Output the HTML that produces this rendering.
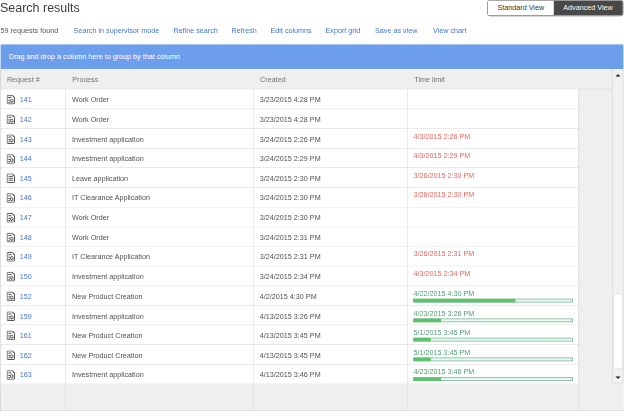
<!DOCTYPE html>
<html><head><meta charset="utf-8">
<style>
*{box-sizing:border-box;margin:0;padding:0}
html,body{width:624px;height:411px;overflow:hidden;background:#fff}
#w{position:absolute;left:0;top:0;width:1040px;height:685px;transform:scale(0.6);transform-origin:0 0;font-family:"Liberation Sans",Arial,sans-serif;color:#444;font-size:12px;overflow:hidden}
.title{position:absolute;left:0;top:-1px;font-size:20.8px;color:#3d3d3d;line-height:28px;white-space:nowrap}
.tabs{position:absolute;left:812px;top:0;width:227px;height:27px;border:1.5px solid #555;border-radius:5px;overflow:hidden;line-height:23px}
.tabs span{position:absolute;top:0;height:24px;text-align:center}
.tabs .a{left:0;width:110px;color:#333;background:#fff}
.tabs .b{left:110px;width:114px;color:#fff;background:#484848}
.tb{position:absolute;top:44.3px;line-height:15px;white-space:nowrap;color:#4376d4}
.tb.g{color:#555}
.bar{position:absolute;left:1px;top:74px;width:1038px;height:41px;background:#6d9eeb;color:#fff;line-height:41px;padding-left:14px}
.grid{position:absolute;left:0;top:115px;width:1039px;height:570px;background:#efefef;border-bottom:1px solid #c4c4c4;box-shadow:inset 1px 0 0 #d8d8d8,inset 0 1px 0 #f8f8f8}
.hd{position:absolute;top:0;height:34px;line-height:34px;color:#727272;border-bottom:1px solid #d8d8d8;padding-left:10.5px}
.row{position:absolute;left:0;width:965px;height:32.77px;background:#fff}
.row>div{position:absolute;top:0;height:100%;line-height:35px;border-right:1px solid #dcdcdc;border-bottom:1px solid #dcdcdc;white-space:nowrap;padding-left:10px}
.c1{left:0;width:110px;padding-left:33px !important;color:#4376d4}
.c2{left:110px;width:313px;color:#505050}
.c3{left:423px;width:257px;color:#505050}
.c4{left:680px;width:285px;padding-left:9px !important}
.c4.t{line-height:15px !important;padding-top:5px}
.red{color:#e8685f}
.grn{color:#4f9f74}
.ic{position:absolute;left:11px;top:9px}
.pb{position:absolute;left:9px;top:21px;width:266px;height:6px;border:1px solid #5f9f7f;background:#e8faf0}
.pb i{position:absolute;left:-1px;top:-1px;height:6px;background:#5cc26c}
.ft{position:absolute;left:1px;top:524px;width:1038px;height:45px;background:#efefef}
.vl{position:absolute;top:524px;width:1px;height:45px;background:#dcdcdc}
.sb{position:absolute;left:1020px;top:0;width:19px;height:524px;background:#f1f1f1;border-left:1px solid #d8d8d8;border-bottom:1px solid #d8d8d8;border-right:1px solid #d0d0d0}
.lb{position:absolute;left:0;top:0;width:1px;height:570px;background:#cfcfcf}
.thumb{position:absolute;left:1022px;top:374px;width:16px;height:126px;background:#fff;border:1px solid #d6d6d6;border-radius:4px}
.ar{position:absolute;left:1024.6px}
</style></head><body>
<div id="w">
<div class="title">Search results</div>
<div class="tabs"><span class="a">Standard View</span><span class="b">Advanced View</span></div>
<span class="tb g" style="left:1px">59 requests found</span>
<span class="tb " style="left:122.7px">Search in supervisor mode</span>
<span class="tb " style="left:289px">Refine search</span>
<span class="tb " style="left:386px">Refresh</span>
<span class="tb " style="left:450.8px">Edit columns</span>
<span class="tb " style="left:542.5px">Export grid</span>
<span class="tb " style="left:625px">Save as view</span>
<span class="tb " style="left:721.7px">View chart</span>
<div class="bar">Drag and drop a column here to group by that column</div>
<div class="grid">
<div class="hd" style="left:0;width:110px;padding-left:11.5px">Request #</div>
<div class="hd" style="left:110px;width:313px">Process</div>
<div class="hd" style="left:423px;width:257px">Created</div>
<div class="hd" style="left:680px;width:340px">Time limit</div>
<div class="row" style="top:34.20px"><div class="c1"><svg class="ic" width="14" height="16" viewBox="0 0 14 16"><path d="M1.8 0.8H10L13.2 4V14.2A1 1 0 0 1 12.2 15.2H1.8A1 1 0 0 1 0.8 14.2V1.8A1 1 0 0 1 1.8 0.8Z" fill="#fff" stroke="#444" stroke-width="1.5"/><path d="M10 0.8V4H13.2Z" fill="#555"/><path d="M3 4.5H8M3 8.8H5.6M3 12.4H5.8M11 12.4H11.6" stroke="#444" stroke-width="1.6"/><circle cx="8.5" cy="9.8" r="2.3" fill="#fff" stroke="#444" stroke-width="1.5"/><path d="M8.5 11.5V13.5" stroke="#444" stroke-width="1.5"/></svg>141</div><div class="c2">Work Order</div><div class="c3">3/23/2015 4:28 PM</div><div class="c4"></div></div>
<div class="row" style="top:66.97px"><div class="c1"><svg class="ic" width="14" height="16" viewBox="0 0 14 16"><path d="M1.8 0.8H10L13.2 4V14.2A1 1 0 0 1 12.2 15.2H1.8A1 1 0 0 1 0.8 14.2V1.8A1 1 0 0 1 1.8 0.8Z" fill="#fff" stroke="#444" stroke-width="1.5"/><path d="M10 0.8V4H13.2Z" fill="#555"/><path d="M3 4.5H8M3 8.8H5.6M3 12.4H5.8M11 12.4H11.6" stroke="#444" stroke-width="1.6"/><circle cx="8.5" cy="9.8" r="2.3" fill="#fff" stroke="#444" stroke-width="1.5"/><path d="M8.5 11.5V13.5" stroke="#444" stroke-width="1.5"/></svg>142</div><div class="c2">Work Order</div><div class="c3">3/23/2015 4:28 PM</div><div class="c4"></div></div>
<div class="row" style="top:99.74px"><div class="c1"><svg class="ic" width="14" height="16" viewBox="0 0 14 16"><path d="M1.8 0.8H10L13.2 4V14.2A1 1 0 0 1 12.2 15.2H1.8A1 1 0 0 1 0.8 14.2V1.8A1 1 0 0 1 1.8 0.8Z" fill="#fff" stroke="#444" stroke-width="1.5"/><path d="M10 0.8V4H13.2Z" fill="#555"/><path d="M3 4.5H8M3 8.8H5.6M3 12.4H5.8M11 12.4H11.6" stroke="#444" stroke-width="1.6"/><circle cx="8.5" cy="9.8" r="2.3" fill="#fff" stroke="#444" stroke-width="1.5"/><path d="M8.5 11.5V13.5" stroke="#444" stroke-width="1.5"/></svg>143</div><div class="c2">Investment application</div><div class="c3">3/24/2015 2:26 PM</div><div class="c4 t red">4/3/2015 2:26 PM</div></div>
<div class="row" style="top:132.51px"><div class="c1"><svg class="ic" width="14" height="16" viewBox="0 0 14 16"><path d="M1.8 0.8H10L13.2 4V14.2A1 1 0 0 1 12.2 15.2H1.8A1 1 0 0 1 0.8 14.2V1.8A1 1 0 0 1 1.8 0.8Z" fill="#fff" stroke="#444" stroke-width="1.5"/><path d="M10 0.8V4H13.2Z" fill="#555"/><path d="M3 4.5H8M3 8.8H5.6M3 12.4H5.8M11 12.4H11.6" stroke="#444" stroke-width="1.6"/><circle cx="8.5" cy="9.8" r="2.3" fill="#fff" stroke="#444" stroke-width="1.5"/><path d="M8.5 11.5V13.5" stroke="#444" stroke-width="1.5"/></svg>144</div><div class="c2">Investment application</div><div class="c3">3/24/2015 2:29 PM</div><div class="c4 t red">4/3/2015 2:29 PM</div></div>
<div class="row" style="top:165.28px"><div class="c1"><svg class="ic" width="14" height="16" viewBox="0 0 14 16"><path d="M1.8 0.8H10L13.2 4V14.2A1 1 0 0 1 12.2 15.2H1.8A1 1 0 0 1 0.8 14.2V1.8A1 1 0 0 1 1.8 0.8Z" fill="#fff" stroke="#444" stroke-width="1.5"/><path d="M10 0.8V4H13.2Z" fill="#555"/><path d="M3.2 5H10.8M3.2 8.2H10.8M3.2 11.4H10.8" stroke="#444" stroke-width="1.5"/></svg>145</div><div class="c2">Leave application</div><div class="c3">3/24/2015 2:30 PM</div><div class="c4 t red">3/26/2015 2:30 PM</div></div>
<div class="row" style="top:198.05px"><div class="c1"><svg class="ic" width="14" height="16" viewBox="0 0 14 16"><path d="M1.8 0.8H10L13.2 4V14.2A1 1 0 0 1 12.2 15.2H1.8A1 1 0 0 1 0.8 14.2V1.8A1 1 0 0 1 1.8 0.8Z" fill="#fff" stroke="#444" stroke-width="1.5"/><path d="M10 0.8V4H13.2Z" fill="#555"/><path d="M3 4.5H8M3 8.8H5.6M3 12.4H5.8M11 12.4H11.6" stroke="#444" stroke-width="1.6"/><circle cx="8.5" cy="9.8" r="2.3" fill="#fff" stroke="#444" stroke-width="1.5"/><path d="M8.5 11.5V13.5" stroke="#444" stroke-width="1.5"/></svg>146</div><div class="c2">IT Clearance Application</div><div class="c3">3/24/2015 2:30 PM</div><div class="c4 t red">3/26/2015 2:30 PM</div></div>
<div class="row" style="top:230.82px"><div class="c1"><svg class="ic" width="14" height="16" viewBox="0 0 14 16"><path d="M1.8 0.8H10L13.2 4V14.2A1 1 0 0 1 12.2 15.2H1.8A1 1 0 0 1 0.8 14.2V1.8A1 1 0 0 1 1.8 0.8Z" fill="#fff" stroke="#444" stroke-width="1.5"/><path d="M10 0.8V4H13.2Z" fill="#555"/><path d="M3 4.5H8M3 8.8H5.6M3 12.4H5.8M11 12.4H11.6" stroke="#444" stroke-width="1.6"/><circle cx="8.5" cy="9.8" r="2.3" fill="#fff" stroke="#444" stroke-width="1.5"/><path d="M8.5 11.5V13.5" stroke="#444" stroke-width="1.5"/></svg>147</div><div class="c2">Work Order</div><div class="c3">3/24/2015 2:30 PM</div><div class="c4"></div></div>
<div class="row" style="top:263.59px"><div class="c1"><svg class="ic" width="14" height="16" viewBox="0 0 14 16"><path d="M1.8 0.8H10L13.2 4V14.2A1 1 0 0 1 12.2 15.2H1.8A1 1 0 0 1 0.8 14.2V1.8A1 1 0 0 1 1.8 0.8Z" fill="#fff" stroke="#444" stroke-width="1.5"/><path d="M10 0.8V4H13.2Z" fill="#555"/><path d="M3 4.5H8M3 8.8H5.6M3 12.4H5.8M11 12.4H11.6" stroke="#444" stroke-width="1.6"/><circle cx="8.5" cy="9.8" r="2.3" fill="#fff" stroke="#444" stroke-width="1.5"/><path d="M8.5 11.5V13.5" stroke="#444" stroke-width="1.5"/></svg>148</div><div class="c2">Work Order</div><div class="c3">3/24/2015 2:31 PM</div><div class="c4"></div></div>
<div class="row" style="top:296.36px"><div class="c1"><svg class="ic" width="14" height="16" viewBox="0 0 14 16"><path d="M1.8 0.8H10L13.2 4V14.2A1 1 0 0 1 12.2 15.2H1.8A1 1 0 0 1 0.8 14.2V1.8A1 1 0 0 1 1.8 0.8Z" fill="#fff" stroke="#444" stroke-width="1.5"/><path d="M10 0.8V4H13.2Z" fill="#555"/><path d="M3 4.5H8M3 8.8H5.6M3 12.4H5.8M11 12.4H11.6" stroke="#444" stroke-width="1.6"/><circle cx="8.5" cy="9.8" r="2.3" fill="#fff" stroke="#444" stroke-width="1.5"/><path d="M8.5 11.5V13.5" stroke="#444" stroke-width="1.5"/></svg>149</div><div class="c2">IT Clearance Application</div><div class="c3">3/24/2015 2:31 PM</div><div class="c4 t red">3/26/2015 2:31 PM</div></div>
<div class="row" style="top:329.13px"><div class="c1"><svg class="ic" width="14" height="16" viewBox="0 0 14 16"><path d="M1.8 0.8H10L13.2 4V14.2A1 1 0 0 1 12.2 15.2H1.8A1 1 0 0 1 0.8 14.2V1.8A1 1 0 0 1 1.8 0.8Z" fill="#fff" stroke="#444" stroke-width="1.5"/><path d="M10 0.8V4H13.2Z" fill="#555"/><path d="M3 4.5H8M3 8.8H5.6M3 12.4H5.8M11 12.4H11.6" stroke="#444" stroke-width="1.6"/><circle cx="8.5" cy="9.8" r="2.3" fill="#fff" stroke="#444" stroke-width="1.5"/><path d="M8.5 11.5V13.5" stroke="#444" stroke-width="1.5"/></svg>150</div><div class="c2">Investment application</div><div class="c3">3/24/2015 2:34 PM</div><div class="c4 t red">4/3/2015 2:34 PM</div></div>
<div class="row" style="top:361.90px"><div class="c1"><svg class="ic" width="14" height="16" viewBox="0 0 14 16"><path d="M1.8 0.8H10L13.2 4V14.2A1 1 0 0 1 12.2 15.2H1.8A1 1 0 0 1 0.8 14.2V1.8A1 1 0 0 1 1.8 0.8Z" fill="#fff" stroke="#444" stroke-width="1.5"/><path d="M10 0.8V4H13.2Z" fill="#555"/><path d="M3 4.5H8M3 8.8H5.6M3 12.4H5.8M11 12.4H11.6" stroke="#444" stroke-width="1.6"/><circle cx="8.5" cy="9.8" r="2.3" fill="#fff" stroke="#444" stroke-width="1.5"/><path d="M8.5 11.5V13.5" stroke="#444" stroke-width="1.5"/></svg>152</div><div class="c2">New Product Creation</div><div class="c3">4/2/2015 4:30 PM</div><div class="c4 t grn">4/22/2015 4:30 PM<span class="pb"><i style="width:64.3%"></i></span></div></div>
<div class="row" style="top:394.67px"><div class="c1"><svg class="ic" width="14" height="16" viewBox="0 0 14 16"><path d="M1.8 0.8H10L13.2 4V14.2A1 1 0 0 1 12.2 15.2H1.8A1 1 0 0 1 0.8 14.2V1.8A1 1 0 0 1 1.8 0.8Z" fill="#fff" stroke="#444" stroke-width="1.5"/><path d="M10 0.8V4H13.2Z" fill="#555"/><path d="M3 4.5H8M3 8.8H5.6M3 12.4H5.8M11 12.4H11.6" stroke="#444" stroke-width="1.6"/><circle cx="8.5" cy="9.8" r="2.3" fill="#fff" stroke="#444" stroke-width="1.5"/><path d="M8.5 11.5V13.5" stroke="#444" stroke-width="1.5"/></svg>159</div><div class="c2">Investment application</div><div class="c3">4/13/2015 3:26 PM</div><div class="c4 t grn">4/23/2015 3:26 PM<span class="pb"><i style="width:17.4%"></i></span></div></div>
<div class="row" style="top:427.44px"><div class="c1"><svg class="ic" width="14" height="16" viewBox="0 0 14 16"><path d="M1.8 0.8H10L13.2 4V14.2A1 1 0 0 1 12.2 15.2H1.8A1 1 0 0 1 0.8 14.2V1.8A1 1 0 0 1 1.8 0.8Z" fill="#fff" stroke="#444" stroke-width="1.5"/><path d="M10 0.8V4H13.2Z" fill="#555"/><path d="M3 4.5H8M3 8.8H5.6M3 12.4H5.8M11 12.4H11.6" stroke="#444" stroke-width="1.6"/><circle cx="8.5" cy="9.8" r="2.3" fill="#fff" stroke="#444" stroke-width="1.5"/><path d="M8.5 11.5V13.5" stroke="#444" stroke-width="1.5"/></svg>161</div><div class="c2">New Product Creation</div><div class="c3">4/13/2015 3:45 PM</div><div class="c4 t grn">5/1/2015 3:45 PM<span class="pb"><i style="width:10.8%"></i></span></div></div>
<div class="row" style="top:460.21px"><div class="c1"><svg class="ic" width="14" height="16" viewBox="0 0 14 16"><path d="M1.8 0.8H10L13.2 4V14.2A1 1 0 0 1 12.2 15.2H1.8A1 1 0 0 1 0.8 14.2V1.8A1 1 0 0 1 1.8 0.8Z" fill="#fff" stroke="#444" stroke-width="1.5"/><path d="M10 0.8V4H13.2Z" fill="#555"/><path d="M3 4.5H8M3 8.8H5.6M3 12.4H5.8M11 12.4H11.6" stroke="#444" stroke-width="1.6"/><circle cx="8.5" cy="9.8" r="2.3" fill="#fff" stroke="#444" stroke-width="1.5"/><path d="M8.5 11.5V13.5" stroke="#444" stroke-width="1.5"/></svg>162</div><div class="c2">New Product Creation</div><div class="c3">4/13/2015 3:45 PM</div><div class="c4 t grn">5/1/2015 3:45 PM<span class="pb"><i style="width:10.8%"></i></span></div></div>
<div class="row" style="top:492.98px"><div class="c1"><svg class="ic" width="14" height="16" viewBox="0 0 14 16"><path d="M1.8 0.8H10L13.2 4V14.2A1 1 0 0 1 12.2 15.2H1.8A1 1 0 0 1 0.8 14.2V1.8A1 1 0 0 1 1.8 0.8Z" fill="#fff" stroke="#444" stroke-width="1.5"/><path d="M10 0.8V4H13.2Z" fill="#555"/><path d="M3 4.5H8M3 8.8H5.6M3 12.4H5.8M11 12.4H11.6" stroke="#444" stroke-width="1.6"/><circle cx="8.5" cy="9.8" r="2.3" fill="#fff" stroke="#444" stroke-width="1.5"/><path d="M8.5 11.5V13.5" stroke="#444" stroke-width="1.5"/></svg>163</div><div class="c2">Investment application</div><div class="c3">4/13/2015 3:46 PM</div><div class="c4 t grn">4/23/2015 3:46 PM<span class="pb"><i style="width:17.4%"></i></span></div></div>
<div class="ft"></div><div class="vl" style="left:109px"></div><div class="vl" style="left:422px"></div><div class="vl" style="left:679px"></div><div class="vl" style="left:964px;top:34px;height:535px"></div>
<div class="sb"></div><div class="lb"></div><div class="thumb"></div>
<svg class="ar" style="top:8px" width="10" height="5" viewBox="0 0 10 5"><path d="M0.6 5L5 0.2L9.4 5Z" fill="#222"/></svg>
<svg class="ar" style="top:512px" width="10" height="5" viewBox="0 0 10 5"><path d="M0.6 0L5 4.8L9.4 0Z" fill="#222"/></svg>
</div>
</div>
</body></html>
